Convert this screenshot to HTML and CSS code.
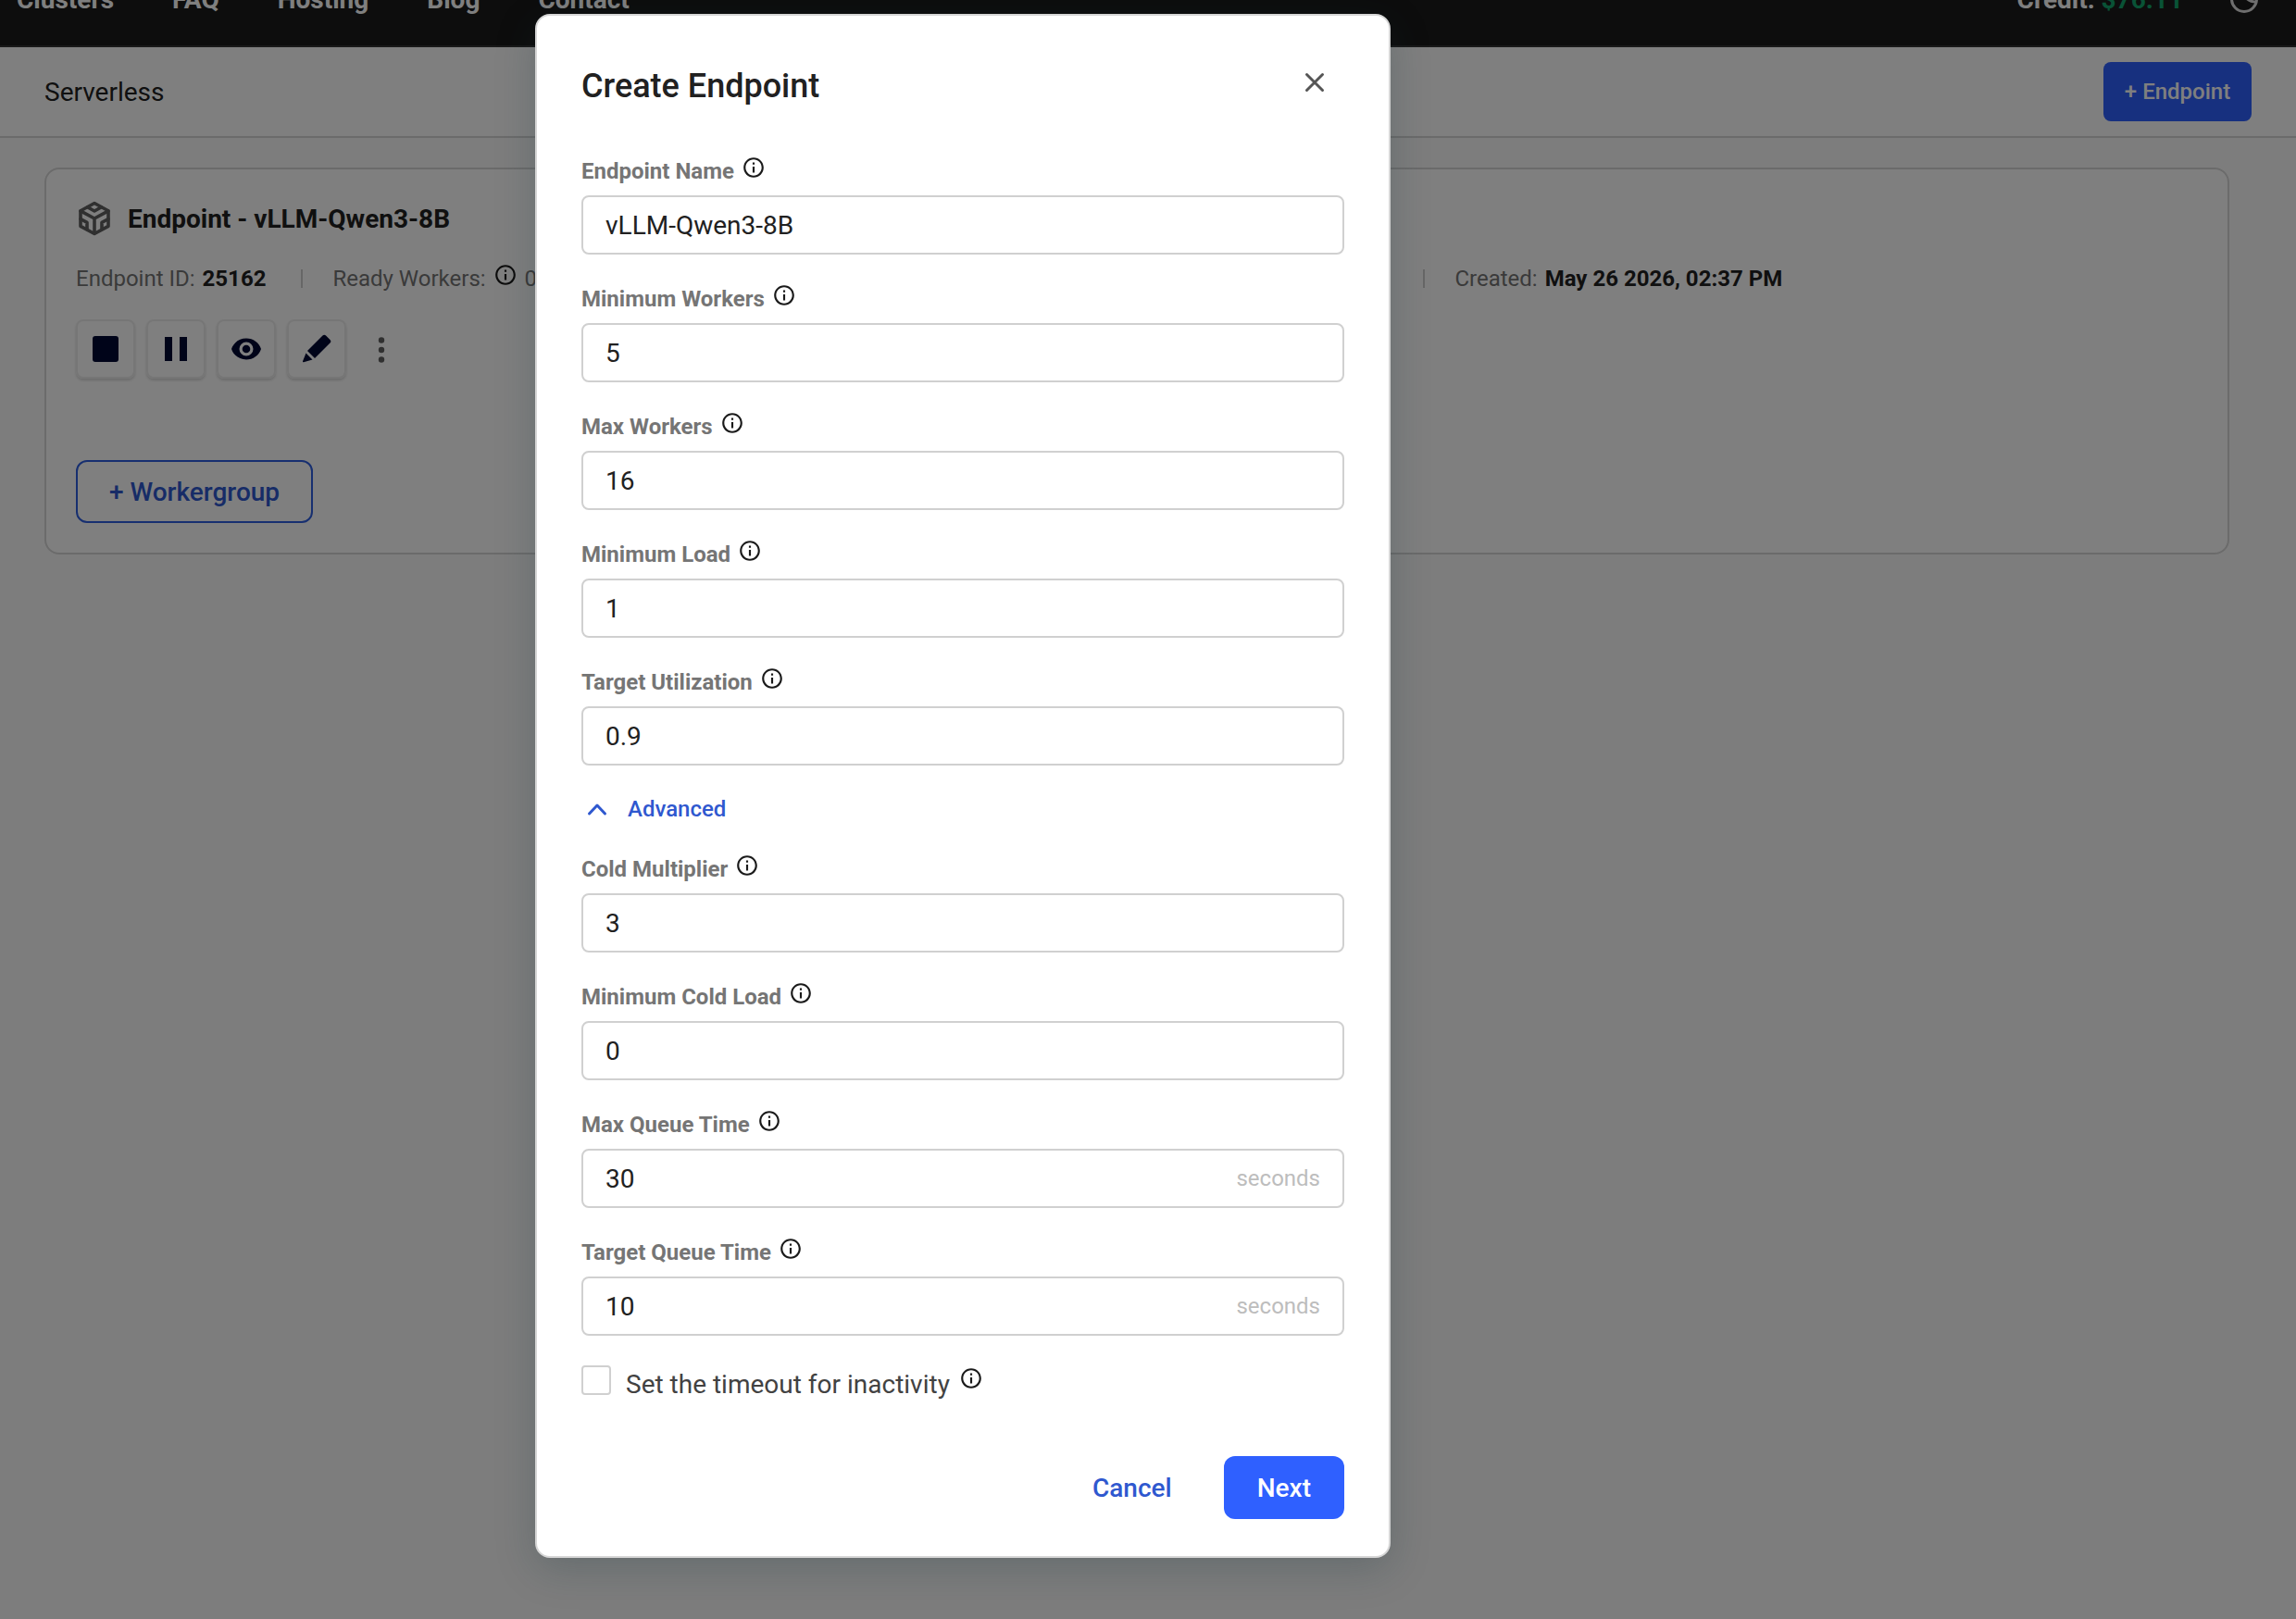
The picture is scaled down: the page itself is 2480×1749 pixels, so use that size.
FILE: index.html
```
<!DOCTYPE html>
<html lang="en">
<head>
    <meta charset="UTF-8">
    <meta name="viewport" content="width=device-width, initial-scale=1.0">
    <title>Serverless</title>
    <link rel="stylesheet" href="styles.css">
</head>
<body>
    <svg class="sprite" aria-hidden="true">
        <symbol id="info" viewBox="0 0 24 24">
            <path d="M11 7h2v2h-2zm0 4h2v6h-2zm1-9C6.48 2 2 6.48 2 12s4.48 10 10 10 10-4.48 10-10S17.52 2 12 2m0 18c-4.41 0-8-3.59-8-8s3.59-8 8-8 8 3.59 8 8-3.59 8-8 8"/>
        </symbol>
    </svg>

    <header class="site-header">
        <nav class="site-nav">
            <a href="#">Clusters</a>
            <a href="#">FAQ</a>
            <a href="#">Hosting</a>
            <a href="#">Blog</a>
            <a href="#">Contact</a>
        </nav>
        <div class="account">
            <span class="credit">Credit: <span class="amount">$76.11</span></span>
            <button type="button" class="theme-btn" aria-label="Toggle theme">
                <svg viewBox="0 0 32 32" fill="none" stroke="currentColor" stroke-width="3">
                    <circle cx="16" cy="16" r="13.5"/>
                    <path d="M14 3c0 10 6 16 15 16"/>
                </svg>
            </button>
        </div>
    </header>

    <div class="page-bar">
        <h1>Serverless</h1>
        <button type="button" class="btn-endpoint">+ Endpoint</button>
    </div>

    <main class="content">
        <section class="card">
            <div class="card-title">
                <svg viewBox="0 0 36 38" fill="none" stroke="currentColor" stroke-width="3.600" stroke-linejoin="round" stroke-linecap="round">
                    <path d="M18 2.500 33 10.800v16.500L18 35.500 3 27.300V10.800z"/>
                    <path d="M3 10.800 18 19l15-8.200M18 19v16M10.500 6.800 18 11l7.500-4.200M3 19.500l7 3.800v7.500M33 19.500l-7 3.800v7.500"/>
                </svg>
                <h2>Endpoint - vLLM-Qwen3-8B</h2>
            </div>
            <div class="meta">
                <div class="meta-item">Endpoint ID: <strong>25162</strong></div>
                <div class="meta-item ready">
                    Ready Workers:
                    <svg class="info-icon"><use href="#info"/></svg>
                    0
                </div>
                <div class="meta-item">Created: <strong>May 26 2026, 02:37 PM</strong></div>
            </div>
            <div class="actions">
                <button type="button" class="icon-btn" aria-label="Stop">
                    <svg viewBox="0 0 32 32"><rect x="2" y="2" width="28" height="28" rx="3"/></svg>
                </button>
                <button type="button" class="icon-btn" aria-label="Pause">
                    <svg viewBox="0 0 32 32"><path d="M4 3h8v26H4zM20 3h8v26h-8z"/></svg>
                </button>
                <button type="button" class="icon-btn" aria-label="View">
                    <svg viewBox="0 0 32 32"><path fill-rule="evenodd" d="M16 4.500C8.500 4.500 2.200 9.200 0 16c2.200 6.800 8.500 11.500 16 11.500S29.800 22.800 32 16C29.800 9.200 23.500 4.500 16 4.500zm0 19a7.500 7.500 0 1 1 0-15 7.500 7.500 0 0 1 0 15zm0-3.200a4.300 4.300 0 1 0 0-8.600 4.300 4.300 0 0 0 0 8.600z"/></svg>
                </button>
                <button type="button" class="icon-btn" aria-label="Edit">
                    <svg viewBox="0 0 32 32"><path d="M22.500 1.500a2.500 2.500 0 0 1 3.500 0l4.500 4.500a2.500 2.500 0 0 1 0 3.500L14 26l-8-8zM4.500 20.500l7 7-9.500 2.800a.8.800 0 0 1-1-1z"/></svg>
                </button>
                <button type="button" class="more-btn" aria-label="More">
                    <svg viewBox="0 0 32 32"><circle cx="16" cy="5.500" r="3.200"/><circle cx="16" cy="16" r="3.200"/><circle cx="16" cy="26.500" r="3.200"/></svg>
                </button>
            </div>
            <button type="button" class="btn btn-outline">+ Workergroup</button>
        </section>
    </main>

    <div class="overlay">
        <form class="modal" role="dialog" aria-labelledby="modalTitle">
            <div class="modal-header">
                <h2 id="modalTitle">Create Endpoint</h2>
                <button type="button" class="close-btn" aria-label="Close">
                    <svg viewBox="0 0 24 24" fill="none" stroke="currentColor" stroke-width="3" stroke-linecap="round"><path d="M3.500 3.500l17 17M20.500 3.500l-17 17"/></svg>
                </button>
            </div>

            <div class="fields">
                <div class="field">
                    <label for="name">Endpoint Name <svg class="info-icon"><use href="#info"/></svg></label>
                    <input type="text" id="name" name="name" value="vLLM-Qwen3-8B">
                </div>
                <div class="field">
                    <label for="minWorkers">Minimum Workers <svg class="info-icon"><use href="#info"/></svg></label>
                    <input type="text" id="minWorkers" name="minWorkers" value="5">
                </div>
                <div class="field">
                    <label for="maxWorkers">Max Workers <svg class="info-icon"><use href="#info"/></svg></label>
                    <input type="text" id="maxWorkers" name="maxWorkers" value="16">
                </div>
                <div class="field">
                    <label for="minLoad">Minimum Load <svg class="info-icon"><use href="#info"/></svg></label>
                    <input type="text" id="minLoad" name="minLoad" value="1">
                </div>
                <div class="field">
                    <label for="targetUtil">Target Utilization <svg class="info-icon"><use href="#info"/></svg></label>
                    <input type="text" id="targetUtil" name="targetUtil" value="0.9">
                </div>

                <button type="button" class="advanced-btn">
                    <svg viewBox="0 0 34 34" fill="none" stroke="currentColor" stroke-width="3" stroke-linecap="round" stroke-linejoin="round"><path d="M8.500 22l8.500-9 8.500 9"/></svg>
                    Advanced
                </button>

                <div class="field">
                    <label for="coldMult">Cold Multiplier <svg class="info-icon"><use href="#info"/></svg></label>
                    <input type="text" id="coldMult" name="coldMult" value="3">
                </div>
                <div class="field">
                    <label for="minCold">Minimum Cold Load <svg class="info-icon"><use href="#info"/></svg></label>
                    <input type="text" id="minCold" name="minCold" value="0">
                </div>
                <div class="field">
                    <label for="maxQueue">Max Queue Time <svg class="info-icon"><use href="#info"/></svg></label>
                    <div class="input-unit">
                        <input type="text" id="maxQueue" name="maxQueue" value="30">
                        <span>seconds</span>
                    </div>
                </div>
                <div class="field">
                    <label for="targetQueue">Target Queue Time <svg class="info-icon"><use href="#info"/></svg></label>
                    <div class="input-unit">
                        <input type="text" id="targetQueue" name="targetQueue" value="10">
                        <span>seconds</span>
                    </div>
                </div>
            </div>

            <div class="check-row">
                <input type="checkbox" id="timeout" name="timeout">
                <label for="timeout">Set the timeout for inactivity</label>
                <svg class="info-icon"><use href="#info"/></svg>
            </div>

            <div class="modal-footer">
                <button type="button" class="btn btn-text">Cancel</button>
                <button type="submit" class="btn btn-primary">Next</button>
            </div>
        </form>
    </div>
</body>
</html>
```

FILE: styles.css
```
* {
    box-sizing: border-box;
}
body {
    margin: 0;
    min-height: 100vh;
    overflow: hidden;
    background-color: #fbfbfb;
    color: #212121;
    font-family: Roboto, sans-serif;
    font-size: 28px;
}
h1, h2 {
    margin: 0;
}
button, input {
    font-family: inherit;
    font-size: inherit;
}
button {
    padding: 0;
    border: none;
    background: none;
    cursor: pointer;
}
.sprite {
    display: none;
}
.info-icon {
    width: 26px;
    height: 26px;
    margin-top: 1px;
    fill: #1a1a1a;
}

/* top of the page, scrolled half out of view */
.site-header {
    display: flex;
    justify-content: space-between;
    align-items: center;
    height: 102px;
    margin-top: -51px;
    padding: 0 40px 0 18px;
    background-color: #1a1a1a;
    border-bottom: 2px solid #333;
    font-weight: 700;
}
.site-nav {
    display: flex;
    gap: 63px;
}
.site-nav a {
    color: #fff;
    text-decoration: none;
}
.account {
    display: flex;
    align-items: center;
    gap: 50px;
    color: #fff;
}
.amount {
    color: #12a56c;
}
.theme-btn {
    color: #ddd;
}
.theme-btn svg {
    display: block;
    width: 32px;
    height: 32px;
}

.page-bar {
    display: flex;
    justify-content: space-between;
    align-items: center;
    padding: 16px 48px;
    background-color: #fff;
    border-bottom: 2px solid #d6d6d6;
}
.page-bar h1 {
    font-size: 28px;
    font-weight: 400;
}
.btn-endpoint {
    min-width: 160px;
    height: 64px;
    padding: 0 20px;
    border-radius: 8px;
    background-color: #2f60ff;
    color: #fff;
    font-size: 24px;
    font-weight: 500;
}

.content {
    padding: 32px 72px 32px 48px;
}
.card {
    padding: 32px;
    background-color: #fff;
    border: 2px solid #d6d6d6;
    border-radius: 16px;
}
.card-title {
    display: flex;
    align-items: center;
    gap: 16px;
    height: 42px;
}
.card-title svg {
    width: 40px;
    height: 38px;
    color: #616161;
}
.card-title h2 {
    font-size: 28px;
    font-weight: 700;
}
.meta {
    display: flex;
    margin-top: 26px;
    color: #757575;
    font-size: 24px;
    line-height: 36px;
}
.meta-item {
    display: flex;
    align-items: center;
    gap: 8px;
}
.meta-item + .meta-item::before {
    content: "";
    width: 2px;
    height: 20px;
    margin: 0 24px 0 38px;
    background-color: #ccc;
}
.meta-item strong {
    color: #212121;
}
.ready {
    width: 1212px;
}
.ready .info-icon {
    align-self: flex-start;
}
.actions {
    display: flex;
    gap: 12px;
    margin: 26px 0 88px;
}
.icon-btn {
    display: flex;
    justify-content: center;
    align-items: center;
    width: 64px;
    height: 64px;
    border: 2px solid #ededed;
    border-radius: 8px;
    box-shadow: 0 2px 3px rgba(0, 0, 0, 0.16);
}
.icon-btn svg {
    width: 32px;
    height: 32px;
    fill: #000833;
}
.more-btn {
    width: 52px;
    padding-top: 8px;
}
.more-btn svg {
    width: 32px;
    height: 32px;
    fill: #616161;
}

.btn {
    height: 68px;
    padding: 0 34px;
    border: 2px solid transparent;
    border-radius: 12px;
    font-size: 28px;
    font-weight: 500;
}
.btn-outline {
    display: block;
    border-color: #2f5fe0;
    color: #2f58cf;
}
.btn-text {
    color: #2f58cf;
}
.btn-primary {
    background-color: #2f60ff;
    color: #fff;
}

.overlay {
    position: absolute;
    inset: 0;
    display: flex;
    justify-content: center;
    align-items: flex-start;
    padding: 15px 400px 0 0;
    background-color: rgba(0, 0, 0, 0.5);
}
.modal {
    width: 924px;
    padding: 40px 48px;
    background-color: #fff;
    border: 2px solid #d6d6d6;
    border-radius: 16px;
    box-shadow: 0 12px 44px rgba(20, 50, 60, 0.22);
}
.modal-header {
    display: flex;
    justify-content: space-between;
    align-items: center;
}
.modal-header h2 {
    padding-top: 8px;
    font-size: 36px;
    font-weight: 500;
}
.close-btn {
    display: flex;
    justify-content: center;
    align-items: center;
    width: 64px;
    height: 64px;
    color: #555;
}
.close-btn svg {
    width: 24px;
    height: 24px;
}
.fields {
    display: flex;
    flex-direction: column;
    gap: 30px;
    margin-top: 46px;
}
.field label {
    display: flex;
    align-items: flex-start;
    gap: 8px;
    margin-bottom: 8px;
    color: #757575;
    font-size: 24px;
    font-weight: 700;
    line-height: 36px;
}
.field input {
    display: block;
    width: 100%;
    height: 64px;
    padding: 0 24px;
    background-color: #fff;
    border: 2px solid #d0d0d0;
    border-radius: 8px;
    color: #212121;
}
.input-unit {
    position: relative;
}
.input-unit span {
    position: absolute;
    top: 0;
    right: 26px;
    color: #bdbdbd;
    font-size: 24px;
    line-height: 64px;
}
.advanced-btn {
    display: flex;
    align-items: center;
    align-self: flex-start;
    gap: 16px;
    color: #2f58cf;
    font-size: 24px;
    font-weight: 500;
    line-height: 34px;
}
.advanced-btn svg {
    width: 34px;
    height: 34px;
}
.check-row {
    display: flex;
    align-items: flex-start;
    margin-top: 32px;
    color: #424242;
    line-height: 42px;
}
.check-row input {
    appearance: none;
    width: 32px;
    height: 32px;
    margin: 0 16px 0 0;
    border: 2px solid #d0d0d0;
    border-radius: 4px;
}
.check-row label {
    margin-right: 10px;
}
.modal-footer {
    display: flex;
    justify-content: flex-end;
    gap: 20px;
    margin-top: 56px;
}
```
